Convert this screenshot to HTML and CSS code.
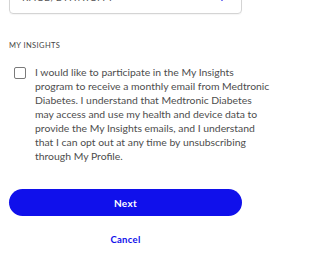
FILE: index.html
```html
<!DOCTYPE html>
<html>
<head>
<meta charset="utf-8">
<link rel="stylesheet" href="styles.css">
</head>
<body>
<div class="page">
  <div class="select">
    <span class="select-label">RACE/ETHNICITY</span>
    <svg class="chevron" width="10" height="6" viewBox="0 0 10 6"><path d="M1 1 L5 5 L9 1" fill="none" stroke="#1010eb" stroke-width="1.6" stroke-linecap="round" stroke-linejoin="round"/></svg>
  </div>
  <div class="section-title">MY INSIGHTS</div>
  <label class="consent">
    <span class="box"></span>
    <span class="consent-text">I would like to participate in the My Insights<br>program to receive a monthly email from Medtronic<br>Diabetes. I understand that Medtronic Diabetes<br>may access and use my health and device data to<br>provide the My Insights emails, and I understand<br>that I can opt out at any time by unsubscribing<br>through My Profile.</span>
  </label>
  <button class="btn-primary">Next</button>
  <button class="btn-link">Cancel</button>
</div>
</body>
</html>
```

FILE: styles.css
```css
html, body {
  margin: 0;
  padding: 0;
  background: #fff;
}
body {
  font-family: Lato, "Open Sans", sans-serif;
  color: #4a4a4a;
}
.page {
  width: 251px;
  box-sizing: border-box;
  display: flex;
  flex-direction: column;
  padding: 0 9px;
}
.select {
  margin-top: -22px;
  height: 34px;
  box-sizing: content-box;
  border: 1px solid #d4d4d4;
  border-radius: 4px;
  display: flex;
  align-items: center;
  justify-content: space-between;
  padding: 0 12px;
  box-shadow: 0 1px 1px rgba(0,0,0,0.04);
}
.select-label {
  position: relative;
  top: 1px;
  font-size: 10px;
  letter-spacing: 0.8px;
  color: #555;
}
.chevron {
  display: block;
  margin-right: 2px;
  margin-top: 4px;
}
.section-title {
  margin-top: 27px;
  font-size: 7.5px;
  letter-spacing: 0.4px;
  color: #444;
  line-height: 10px;
}
.consent {
  margin-top: 14px;
  display: flex;
  gap: 9px;
  padding-left: 5px;
}
.box {
  flex: none;
  width: 10px;
  height: 10px;
  border: 1px solid #7a7a7a;
  border-radius: 2px;
  margin-top: 2px;
}
.consent-text {
  font-size: 10.4px;
  white-space: nowrap;
  line-height: 14px;
  color: #4d4d4d;
}
.btn-primary {
  margin-top: 26px;
  height: 27px;
  border: none;
  border-radius: 14px;
  background: #1010eb;
  color: #fff;
  font-family: Lato, sans-serif;
  font-weight: 700;
  font-size: 10px;
  letter-spacing: 0.3px;
}
.btn-link {
  margin-top: 14px;
  align-self: center;
  border: none;
  background: none;
  color: #1010eb;
  font-family: Lato, sans-serif;
  font-weight: 700;
  font-size: 9.5px;
  letter-spacing: 0.3px;
  padding: 4px 8px;
}
```
